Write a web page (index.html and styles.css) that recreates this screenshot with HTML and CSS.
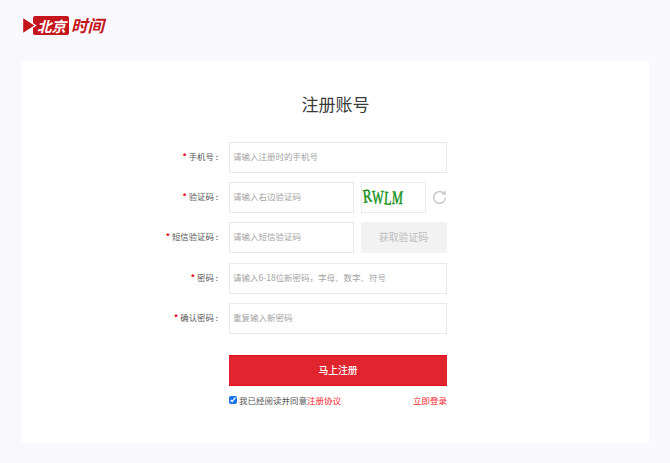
FILE: index.html
```html
<!DOCTYPE html>
<html lang="zh-CN">
<head>
<meta charset="utf-8">
<title>注册账号</title>
<link rel="stylesheet" href="styles.css">
</head>
<body>
<header class="top">
  <div class="logo">
    <svg class="logo-play" width="15" height="19" viewBox="0 0 15 19"><path d="M0.5 1 L13.5 9.5 L0.5 18 Z" fill="#c4161c" stroke="#f9f9fd" stroke-width="1.4" stroke-linejoin="miter"/></svg>
    <span class="logo-box">北京</span>
    <span class="logo-time">时间</span>
  </div>
</header>
<main class="card">
  <h1 class="title">注册账号</h1>
  <form class="form">
    <div class="row">
      <label class="label"><i class="star">*</i>手机号 :</label>
      <input class="input wide" placeholder="请输入注册时的手机号">
    </div>
    <div class="row">
      <label class="label"><i class="star">*</i>验证码 :</label>
      <input class="input half" placeholder="请输入右边验证码">
      <div class="captcha"><span class="cap cap-r">R</span><span class="cap cap-w">W</span><span class="cap cap-l">L</span><span class="cap cap-m">M</span></div>
      <svg class="refresh" width="15" height="15" viewBox="0 0 16 16" fill="none"><path d="M11.8 2.9 A6.3 6.3 0 1 0 14.3 8" stroke="#c9c9c9" stroke-width="1.6"/><path d="M9.6 4.6 L14.8 5.4 L14.2 0.4 Z" fill="#c9c9c9"/></svg>
    </div>
    <div class="row">
      <label class="label"><i class="star">*</i>短信验证码 :</label>
      <input class="input half" placeholder="请输入短信验证码">
      <button type="button" class="sms">获取验证码</button>
    </div>
    <div class="row">
      <label class="label"><i class="star">*</i>密码 :</label>
      <input class="input wide" placeholder="请输入6-18位新密码，字母、数字、符号">
    </div>
    <div class="row">
      <label class="label"><i class="star">*</i>确认密码 :</label>
      <input class="input wide" placeholder="重复输入新密码">
    </div>
    <button type="button" class="submit">马上注册</button>
    <div class="agree">
      <label class="agree-left"><input type="checkbox" class="check" checked>我已经阅读并同意<a class="link">注册协议</a></label>
      <a class="link">立即登录</a>
    </div>
  </form>
</main>
</body>
</html>
```
FILE: styles.css
```css
* { box-sizing: border-box; }
html, body { margin: 0; padding: 0; }
body {
  background: #f9f9fd;
  height: 463px;
  overflow: hidden;
  font-family: "Liberation Sans", "Noto Sans CJK SC", sans-serif;
  color: #333;
}
.top { height: 61px; padding: 16px 0 0 22px; }
.logo { display: flex; align-items: flex-start; height: 20px; }
.logo-play { margin-right: -4px; flex: none; position: relative; z-index: 1; }
.logo-box {
  background: #c4161c;
  color: #fff;
  font: italic 700 14.5px/19px "Noto Sans CJK SC", sans-serif;
  width: 36px;
  height: 19px;
  border-radius: 2px;
  padding-left: 4px;
  white-space: nowrap;
}
.logo-time {
  color: #c4161c;
  font: italic 700 16.5px/19px "Noto Sans CJK SC", sans-serif;
  margin-left: 2px;
}
.card {
  background: #fff;
  margin: 0 21px 0 22px;
  height: 382px;
  padding-top: 32px;
}
.title {
  margin: 0;
  font: 400 17px/22px "Noto Sans CJK SC", sans-serif;
  color: #3a3a3a;
  text-align: center;
}
.form { margin: 27px 0 0 207px; width: 218px; }
.row {
  display: flex;
  align-items: center;
  height: 31px;
  margin-bottom: 9.2px;
  position: relative;
}
.label {
  position: absolute;
  right: 229px;
  padding-bottom: 2px;
  white-space: nowrap;
  font: 400 8.4px/29px "Noto Sans CJK SC", sans-serif;
  color: #555;
}
.star { color: #e60012; font-style: normal; font-weight: 700; margin-right: 2px; }
.input {
  height: 31px;
  border: 1px solid #e8e8e8;
  background: #fff;
  padding: 0 3px 3px;
  font: 400 8.5px "Noto Sans CJK SC", sans-serif;
  outline: none;
  border-radius: 0;
  flex: none;
}
.input::placeholder { color: #a3a3a3; opacity: 1; }
.wide { width: 218px; }
.half { width: 124.5px; }
.captcha {
  display: flex;
  align-items: center;
  width: 65px;
  height: 31px;
  margin-left: 7px;
  border: 1px solid #ececec;
  padding-left: 1px;
  flex: none;
  overflow: hidden;
}
.cap {
  display: block;
  height: 18px;
  font: 400 19px/18px "Liberation Serif", serif;
  color: #159015;
  -webkit-text-stroke: 0.5px #159015;
  transform-origin: left center;
}
.cap-r { width: 9px; transform: scaleX(0.7) rotate(-8deg) translateY(-1px); }
.cap-w { width: 12px; transform: scaleX(0.65); }
.cap-l { width: 8px; transform: scaleX(0.65) rotate(5deg); }
.cap-m { width: 11px; transform: scaleX(0.65) skewX(-6deg); }
.refresh { margin-left: 6.5px; flex: none; }
.sms {
  width: 86px;
  height: 31px;
  margin-left: 7px;
  border: 0;
  background: #f2f2f2;
  color: #bdbdbd;
  font: 400 9.8px "Noto Sans CJK SC", sans-serif;
  padding: 0 0 2px;
  flex: none;
}
.submit {
  display: block;
  width: 218px;
  height: 31px;
  margin-top: 21px;
  border: 0;
  border-top: 1px solid #e60f20;
  border-bottom: 1px solid #e60f20;
  background: #e1252f;
  color: #fff;
  font: 500 9.8px "Noto Sans CJK SC", sans-serif;
  padding: 0;
}
.agree {
  display: flex;
  justify-content: space-between;
  align-items: center;
  margin-top: 6px;
  height: 16px;
  font: 400 8.5px/16px "Noto Sans CJK SC", sans-serif;
  color: #555;
}
.agree-left { display: flex; align-items: center; }
.check { width: 8px; height: 8px; margin: 1px 2px 0 0; accent-color: #1a73e8; }
.link { color: #f5222d; }
```
